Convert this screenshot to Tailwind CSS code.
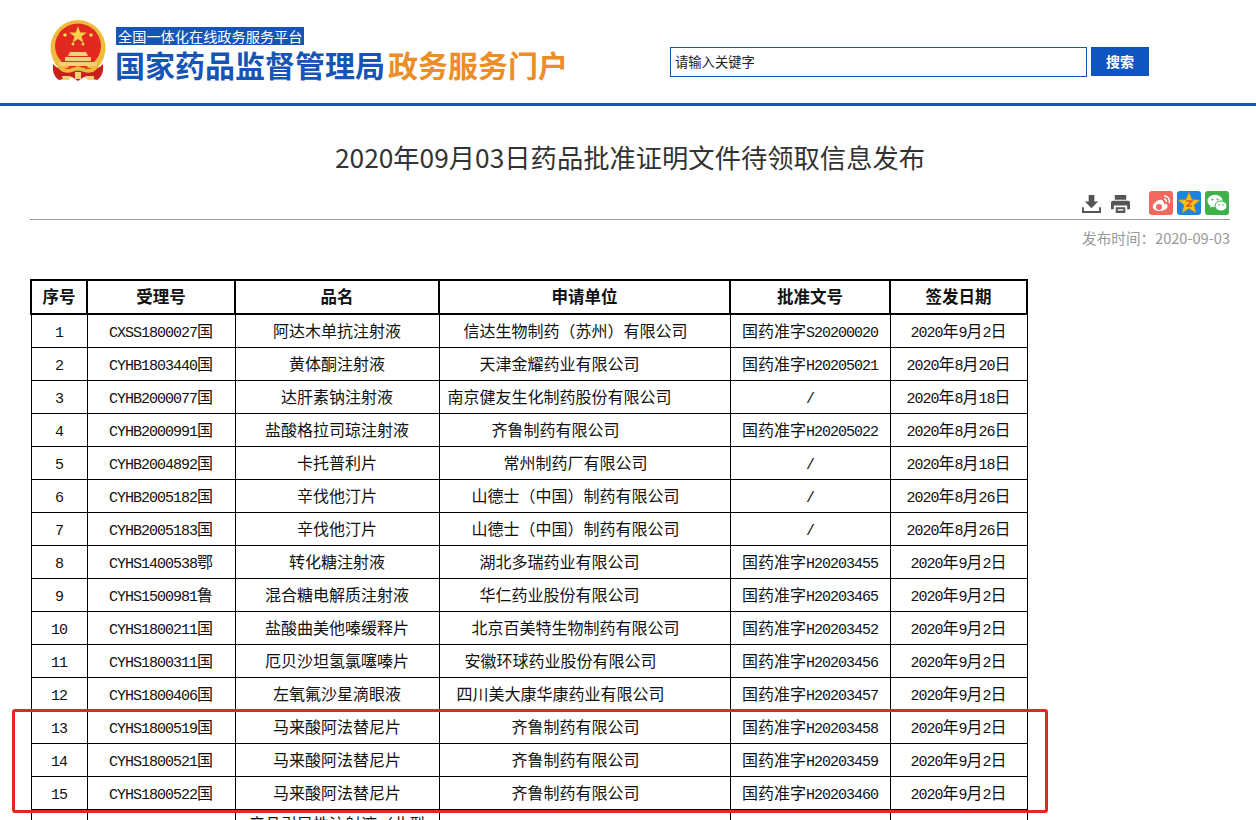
<!DOCTYPE html>
<html lang="zh">

<head>
    <meta charset="UTF-8">
    <title>药品批准证明文件待领取信息发布</title>
    <script src="https://cdn.jsdelivr.net/npm/@tailwindcss/browser@4"></script>
</head>

<body class="relative h-[820px] overflow-hidden bg-white font-['Noto_Sans_CJK_SC',sans-serif]">

    <!-- 头部 -->
    <header class="flex h-[106px] items-start border-b-[3px] border-[#1655b5] pl-[50px]">
        <svg viewBox="0 0 58 62" class="mt-[20px] h-[62px] w-[58px]">
            <ellipse cx="28" cy="28" rx="27.5" ry="28" fill="#eebb3c" />
            <ellipse cx="28" cy="26" rx="23" ry="22.5" fill="#e2291f" />
            <path d="M28 6 l2.2 6.4 6.6 0 -5.3 4 2 6.4 -5.5 -3.9 -5.5 3.9 2 -6.4 -5.3 -4 6.6 0 z" fill="#f6d34a" />
            <circle cx="15" cy="15" r="1.8" fill="#f6d34a" />
            <circle cx="41" cy="15" r="1.8" fill="#f6d34a" />
            <circle cx="23" cy="24" r="1.5" fill="#f6d34a" />
            <circle cx="33" cy="24" r="1.5" fill="#f6d34a" />
            <path d="M20 32 h16 l2 4 h-20 z M15 37 h26 v4 h-26 z M9 42 h38 v4 h-38 z" fill="#f3cf77" />
            <path d="M3 44 C2 54 6 58 9 60 L22 57 L28 61 L34 57 L47 60 C50 58 54 54 53 44 C48 50 42 50 36 47 L28 51 L20 47 C14 50 8 50 3 44 Z" fill="#c8201c" />
            <path d="M8 43 C12 52 21 49 28 46 C35 49 44 52 48 43 L48 47 C44 55 35 53 28 50 C21 53 12 55 8 47 Z" fill="#eebb3c" />
            <path d="M12 56 h9 l-2 4 h-6 z M35 56 h9 v4 h-6 z M25 52 h6 v7 h-6 z" fill="#f3cf77" />
        </svg>
        <div class="ml-[8px] mt-[27px] flex flex-col items-start">
            <span class="h-[18px] bg-[#1655b5] px-[2px] text-[14.2px] leading-[18px] text-white">全国一体化在线政务服务平台</span>
            <h1 class="-ml-[1px] mt-[4px] whitespace-nowrap text-[30px] font-bold leading-[30px] text-[#1655b5]">国家药品监督管理局<span class="ml-[3px] text-[#ec8d26]">政务服务门户</span></h1>
        </div>
        <div class="ml-[102px] mt-[47px] flex gap-[4px]">
            <div class="flex h-[30px] w-[417px] items-center border border-[#1655b5] pl-[4px] text-[13.3px] text-[#222]">请输入关键字</div>
            <button type="button" class="h-[29px] w-[58px] bg-[#0f55c0] text-[14px] font-bold text-white">搜索</button>
        </div>
    </header>

    <h2 class="mt-[33px] pl-[4px] text-center text-[26.3px] leading-[36px] text-[#333]">2020年09月03日药品批准证明文件待领取信息发布</h2>

    <!-- 工具栏 -->
    <div class="ml-[30px] mr-[26px] mt-[15px] flex h-[30px] items-center justify-end gap-[4px] border-b border-[#999] pb-[3px] pr-[1px]">
        <svg viewBox="0 0 20 20" class="mr-[6px] h-[19px] w-[19px] text-[#555]">
            <path d="M7 1 h6 v7 h4 l-7 7 -7 -7 h4 z" fill="currentColor" />
            <path d="M1 14 v5 h18 v-5" fill="none" stroke="currentColor" stroke-width="2" />
        </svg>
        <svg viewBox="0 0 20 20" class="mr-[15px] h-[19px] w-[19px] text-[#555]">
            <path d="M4 1 h12 v5 h-12 z M2 7 h16 a2 2 0 0 1 2 2 v7 h-3 v-4 h-14 v4 h-3 v-7 a2 2 0 0 1 2 -2 z M5 14 h10 v6 h-10 z" fill="currentColor" />
            <rect x="7" y="16" width="6" height="1.5" fill="#fff" />
        </svg>
        <span class="flex h-[24px] w-[24px] items-center justify-center rounded-[3px] bg-[#f1685f]">
            <svg viewBox="0 0 24 24" class="h-[24px] w-[24px]">
                <path d="M10 9 C5 11 3 15 4 17 C6 21 15 21 18 17 C20 14 17 12 15 13 C15 10 13 8 10 9 Z" fill="#fff" />
                <circle cx="10" cy="16" r="3" fill="#f1685f" />
                <path d="M15 5 a5 5 0 0 1 5 7 M15 8 a2 2 0 0 1 2 3" fill="none" stroke="#fff" stroke-width="1.5" />
            </svg>
        </span>
        <span class="flex h-[24px] w-[24px] items-center justify-center rounded-[3px] bg-[#1b83e2]">
            <svg viewBox="0 0 24 24" class="h-[24px] w-[24px]">
                <path d="M12 1 L15 8.5 L23 9 L17 14 L19 22 L12 17.5 L5 22 L7 14 L1 9 L9 8.5 Z" fill="#f5c21b" stroke="#c9791a" stroke-width="0.6" />
                <path d="M9 10 h6 l-5 5 h5" fill="none" stroke="#d8581a" stroke-width="1.5" />
            </svg>
        </span>
        <span class="flex h-[24px] w-[24px] items-center justify-center rounded-[3px] bg-[#3fb14a]">
            <svg viewBox="0 0 24 24" class="h-[24px] w-[24px]">
                <ellipse cx="10" cy="10" rx="7.5" ry="6.2" fill="#fff" />
                <path d="M6 14 l-1 3 3 -2 z" fill="#fff" />
                <ellipse cx="16" cy="15" rx="6" ry="5" fill="#fff" stroke="#3fb14a" />
                <circle cx="7.5" cy="8.5" r="1" fill="#3fb14a" />
                <circle cx="12.5" cy="8.5" r="1" fill="#3fb14a" />
                <circle cx="14" cy="14" r="0.8" fill="#3fb14a" />
                <circle cx="18" cy="14" r="0.8" fill="#3fb14a" />
            </svg>
        </span>
    </div>

    <p class="mr-[26px] mt-[8px] text-right text-[14.6px] leading-[20px] text-[#999]">发布时间：2020-09-03</p>

    <!-- 表格 -->
    <table class="ml-[30px] mt-[31px] w-[996px] table-fixed border-collapse text-center text-[16px] leading-[24px] text-[#111] [&_code]:font-['Liberation_Mono'] [&_code]:text-[15px] [&_code]:leading-[0px] [&_code]:tracking-[-1px] [&_td]:h-[33px] [&_td]:border [&_td]:border-black [&_td]:p-0 [&_td]:pb-[2px] [&_th]:h-[34px] [&_th]:border-2 [&_th]:border-black [&_th]:p-0 [&_th]:pb-[2px] [&_th]:text-[16.5px] [&_th]:font-bold">
        <colgroup>
            <col class="w-[56px]">
            <col class="w-[148px]">
            <col class="w-[204px]">
            <col class="w-[291px]">
            <col class="w-[160px]">
            <col class="w-[137px]">
        </colgroup>
        <thead>
            <tr>
                <th>序号</th>
                <th>受理号</th>
                <th>品名</th>
                <th>申请单位</th>
                <th>批准文号</th>
                <th>签发日期</th>
            </tr>
        </thead>
        <tbody>
            <tr>
                <td><code>1</code></td>
                <td><code>CXSS1800027</code>国</td>
                <td>阿达木单抗注射液</td>
                <td class="pr-[18px]!">信达生物制药（苏州）有限公司</td>
                <td>国药准字<code>S20200020</code></td>
                <td><code>2020</code>年<code>9</code>月<code>2</code>日</td>
            </tr>
            <tr>
                <td><code>2</code></td>
                <td><code>CYHB1803440</code>国</td>
                <td>黄体酮注射液</td>
                <td class="pr-[50px]!">天津金耀药业有限公司</td>
                <td>国药准字<code>H20205021</code></td>
                <td><code>2020</code>年<code>8</code>月<code>20</code>日</td>
            </tr>
            <tr>
                <td><code>3</code></td>
                <td><code>CYHB2000077</code>国</td>
                <td>达肝素钠注射液</td>
                <td class="pr-[50px]!">南京健友生化制药股份有限公司</td>
                <td><code>/</code></td>
                <td><code>2020</code>年<code>8</code>月<code>18</code>日</td>
            </tr>
            <tr>
                <td><code>4</code></td>
                <td><code>CYHB2000991</code>国</td>
                <td>盐酸格拉司琼注射液</td>
                <td class="pr-[58px]!">齐鲁制药有限公司</td>
                <td>国药准字<code>H20205022</code></td>
                <td><code>2020</code>年<code>8</code>月<code>26</code>日</td>
            </tr>
            <tr>
                <td><code>5</code></td>
                <td><code>CYHB2004892</code>国</td>
                <td>卡托普利片</td>
                <td class="pr-[18px]!">常州制药厂有限公司</td>
                <td><code>/</code></td>
                <td><code>2020</code>年<code>8</code>月<code>18</code>日</td>
            </tr>
            <tr>
                <td><code>6</code></td>
                <td><code>CYHB2005182</code>国</td>
                <td>辛伐他汀片</td>
                <td class="pr-[18px]!">山德士（中国）制药有限公司</td>
                <td><code>/</code></td>
                <td><code>2020</code>年<code>8</code>月<code>26</code>日</td>
            </tr>
            <tr>
                <td><code>7</code></td>
                <td><code>CYHB2005183</code>国</td>
                <td>辛伐他汀片</td>
                <td class="pr-[18px]!">山德士（中国）制药有限公司</td>
                <td><code>/</code></td>
                <td><code>2020</code>年<code>8</code>月<code>26</code>日</td>
            </tr>
            <tr>
                <td><code>8</code></td>
                <td><code>CYHS1400538</code>鄂</td>
                <td>转化糖注射液</td>
                <td class="pr-[50px]!">湖北多瑞药业有限公司</td>
                <td>国药准字<code>H20203455</code></td>
                <td><code>2020</code>年<code>9</code>月<code>2</code>日</td>
            </tr>
            <tr>
                <td><code>9</code></td>
                <td><code>CYHS1500981</code>鲁</td>
                <td>混合糖电解质注射液</td>
                <td class="pr-[50px]!">华仁药业股份有限公司</td>
                <td>国药准字<code>H20203465</code></td>
                <td><code>2020</code>年<code>9</code>月<code>2</code>日</td>
            </tr>
            <tr>
                <td><code>10</code></td>
                <td><code>CYHS1800211</code>国</td>
                <td>盐酸曲美他嗪缓释片</td>
                <td class="pr-[18px]!">北京百美特生物制药有限公司</td>
                <td>国药准字<code>H20203452</code></td>
                <td><code>2020</code>年<code>9</code>月<code>2</code>日</td>
            </tr>
            <tr>
                <td><code>11</code></td>
                <td><code>CYHS1800311</code>国</td>
                <td>厄贝沙坦氢氯噻嗪片</td>
                <td class="pr-[48px]!">安徽环球药业股份有限公司</td>
                <td>国药准字<code>H20203456</code></td>
                <td><code>2020</code>年<code>9</code>月<code>2</code>日</td>
            </tr>
            <tr>
                <td><code>12</code></td>
                <td><code>CYHS1800406</code>国</td>
                <td>左氧氟沙星滴眼液</td>
                <td class="pr-[48px]!">四川美大康华康药业有限公司</td>
                <td>国药准字<code>H20203457</code></td>
                <td><code>2020</code>年<code>9</code>月<code>2</code>日</td>
            </tr>
            <tr>
                <td><code>13</code></td>
                <td><code>CYHS1800519</code>国</td>
                <td>马来酸阿法替尼片</td>
                <td class="pr-[18px]!">齐鲁制药有限公司</td>
                <td>国药准字<code>H20203458</code></td>
                <td><code>2020</code>年<code>9</code>月<code>2</code>日</td>
            </tr>
            <tr>
                <td><code>14</code></td>
                <td><code>CYHS1800521</code>国</td>
                <td>马来酸阿法替尼片</td>
                <td class="pr-[18px]!">齐鲁制药有限公司</td>
                <td>国药准字<code>H20203459</code></td>
                <td><code>2020</code>年<code>9</code>月<code>2</code>日</td>
            </tr>
            <tr>
                <td><code>15</code></td>
                <td><code>CYHS1800522</code>国</td>
                <td>马来酸阿法替尼片</td>
                <td class="pr-[18px]!">齐鲁制药有限公司</td>
                <td>国药准字<code>H20203460</code></td>
                <td><code>2020</code>年<code>9</code>月<code>2</code>日</td>
            </tr>
            <tr>
                <td></td>
                <td></td>
                <td class="pb-[6px]!">产品引导性注射液（此型</td>
                <td></td>
                <td></td>
                <td></td>
            </tr>
        </tbody>
    </table>

    <!-- 红框标注 -->
    <div class="absolute left-[12px] top-[709px] h-[104px] w-[1036px] rounded-[3px] border-[3px] border-[#e5281e]"></div>
</body>

</html>
